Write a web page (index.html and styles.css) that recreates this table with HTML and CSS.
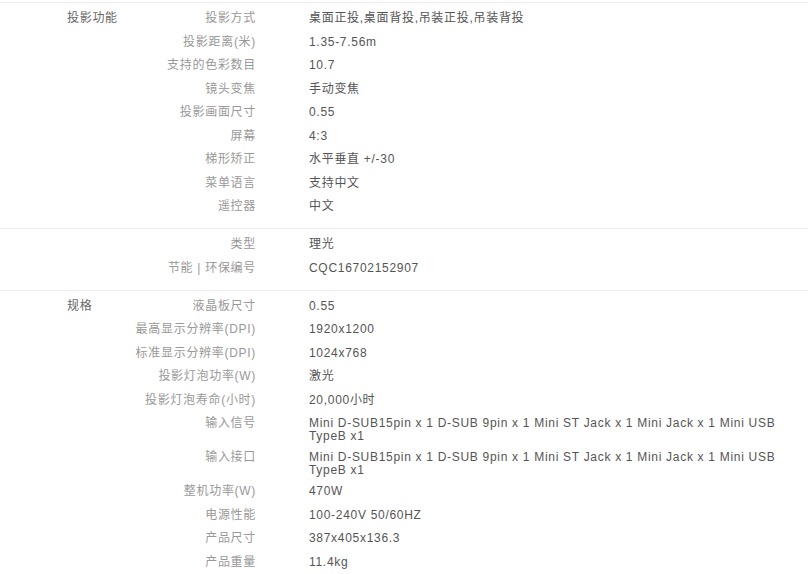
FILE: index.html
```html
<!DOCTYPE html>
<html lang="zh-CN">
<head>
    <meta charset="UTF-8">
    <meta name="viewport" content="width=device-width, initial-scale=1.0">
    <title>规格参数</title>
    <link rel="stylesheet" href="styles.css">
</head>
<body>
    <div class="specs">
        <div class="spec-group">
            <div class="group-title">投影功能</div>
            <dl class="spec-list">
                <div class="spec-row"><dt>投影方式</dt><dd>桌面正投,桌面背投,吊装正投,吊装背投</dd></div>
                <div class="spec-row"><dt>投影距离(米)</dt><dd>1.35-7.56m</dd></div>
                <div class="spec-row"><dt>支持的色彩数目</dt><dd>10.7</dd></div>
                <div class="spec-row"><dt>镜头变焦</dt><dd>手动变焦</dd></div>
                <div class="spec-row"><dt>投影画面尺寸</dt><dd>0.55</dd></div>
                <div class="spec-row"><dt>屏幕</dt><dd>4:3</dd></div>
                <div class="spec-row"><dt>梯形矫正</dt><dd>水平垂直 +/-30</dd></div>
                <div class="spec-row"><dt>菜单语言</dt><dd>支持中文</dd></div>
                <div class="spec-row"><dt>遥控器</dt><dd>中文</dd></div>
            </dl>
        </div>

        <div class="spec-group">
            <div class="group-title"></div>
            <dl class="spec-list">
                <div class="spec-row"><dt>类型</dt><dd>理光</dd></div>
                <div class="spec-row"><dt>节能 | 环保编号</dt><dd>CQC16702152907</dd></div>
            </dl>
        </div>

        <div class="spec-group">
            <div class="group-title">规格</div>
            <dl class="spec-list">
                <div class="spec-row"><dt>液晶板尺寸</dt><dd>0.55</dd></div>
                <div class="spec-row"><dt>最高显示分辨率(DPI)</dt><dd>1920x1200</dd></div>
                <div class="spec-row"><dt>标准显示分辨率(DPI)</dt><dd>1024x768</dd></div>
                <div class="spec-row"><dt>投影灯泡功率(W)</dt><dd>激光</dd></div>
                <div class="spec-row"><dt>投影灯泡寿命(小时)</dt><dd>20,000小时</dd></div>
                <div class="spec-row"><dt>输入信号</dt><dd>Mini D-SUB15pin x 1 D-SUB 9pin x 1 Mini ST Jack x 1 Mini Jack x 1 Mini USB TypeB x1</dd></div>
                <div class="spec-row"><dt>输入接口</dt><dd>Mini D-SUB15pin x 1 D-SUB 9pin x 1 Mini ST Jack x 1 Mini Jack x 1 Mini USB TypeB x1</dd></div>
                <div class="spec-row"><dt>整机功率(W)</dt><dd>470W</dd></div>
                <div class="spec-row"><dt>电源性能</dt><dd>100-240V 50/60HZ</dd></div>
                <div class="spec-row"><dt>产品尺寸</dt><dd>387x405x136.3</dd></div>
                <div class="spec-row"><dt>产品重量</dt><dd>11.4kg</dd></div>
            </dl>
        </div>
    </div>
</body>
</html>
```

FILE: styles.css
```css
body {
    margin: 0;
    padding: 0;
    background-color: #fff;
    font-family: "Liberation Sans", Arial, "Noto Sans CJK SC", sans-serif;
    font-size: 12px;
    letter-spacing: 0.7px;
    color: #555;
}
.specs {
    padding-top: 2px;
}
.spec-group {
    display: flex;
    border-top: 1px solid #eee;
    padding: 4px 20px 9.5px 67px;
}
.group-title {
    width: 60px;
    flex-shrink: 0;
    padding-top: 4px;
    line-height: 15.5px;
    color: #666;
}
.spec-list {
    flex: 1;
    margin: 0;
}
.spec-row {
    display: grid;
    grid-template-columns: 129px 1fr;
    column-gap: 53px;
    padding: 4px 0;
}
.spec-row dt {
    text-align: right;
    line-height: 15.5px;
    color: #999;
    white-space: nowrap;
}
.spec-row dd {
    margin: 0;
    padding-top: 1px;
    line-height: 12.5px;
    color: #555;
}
```
